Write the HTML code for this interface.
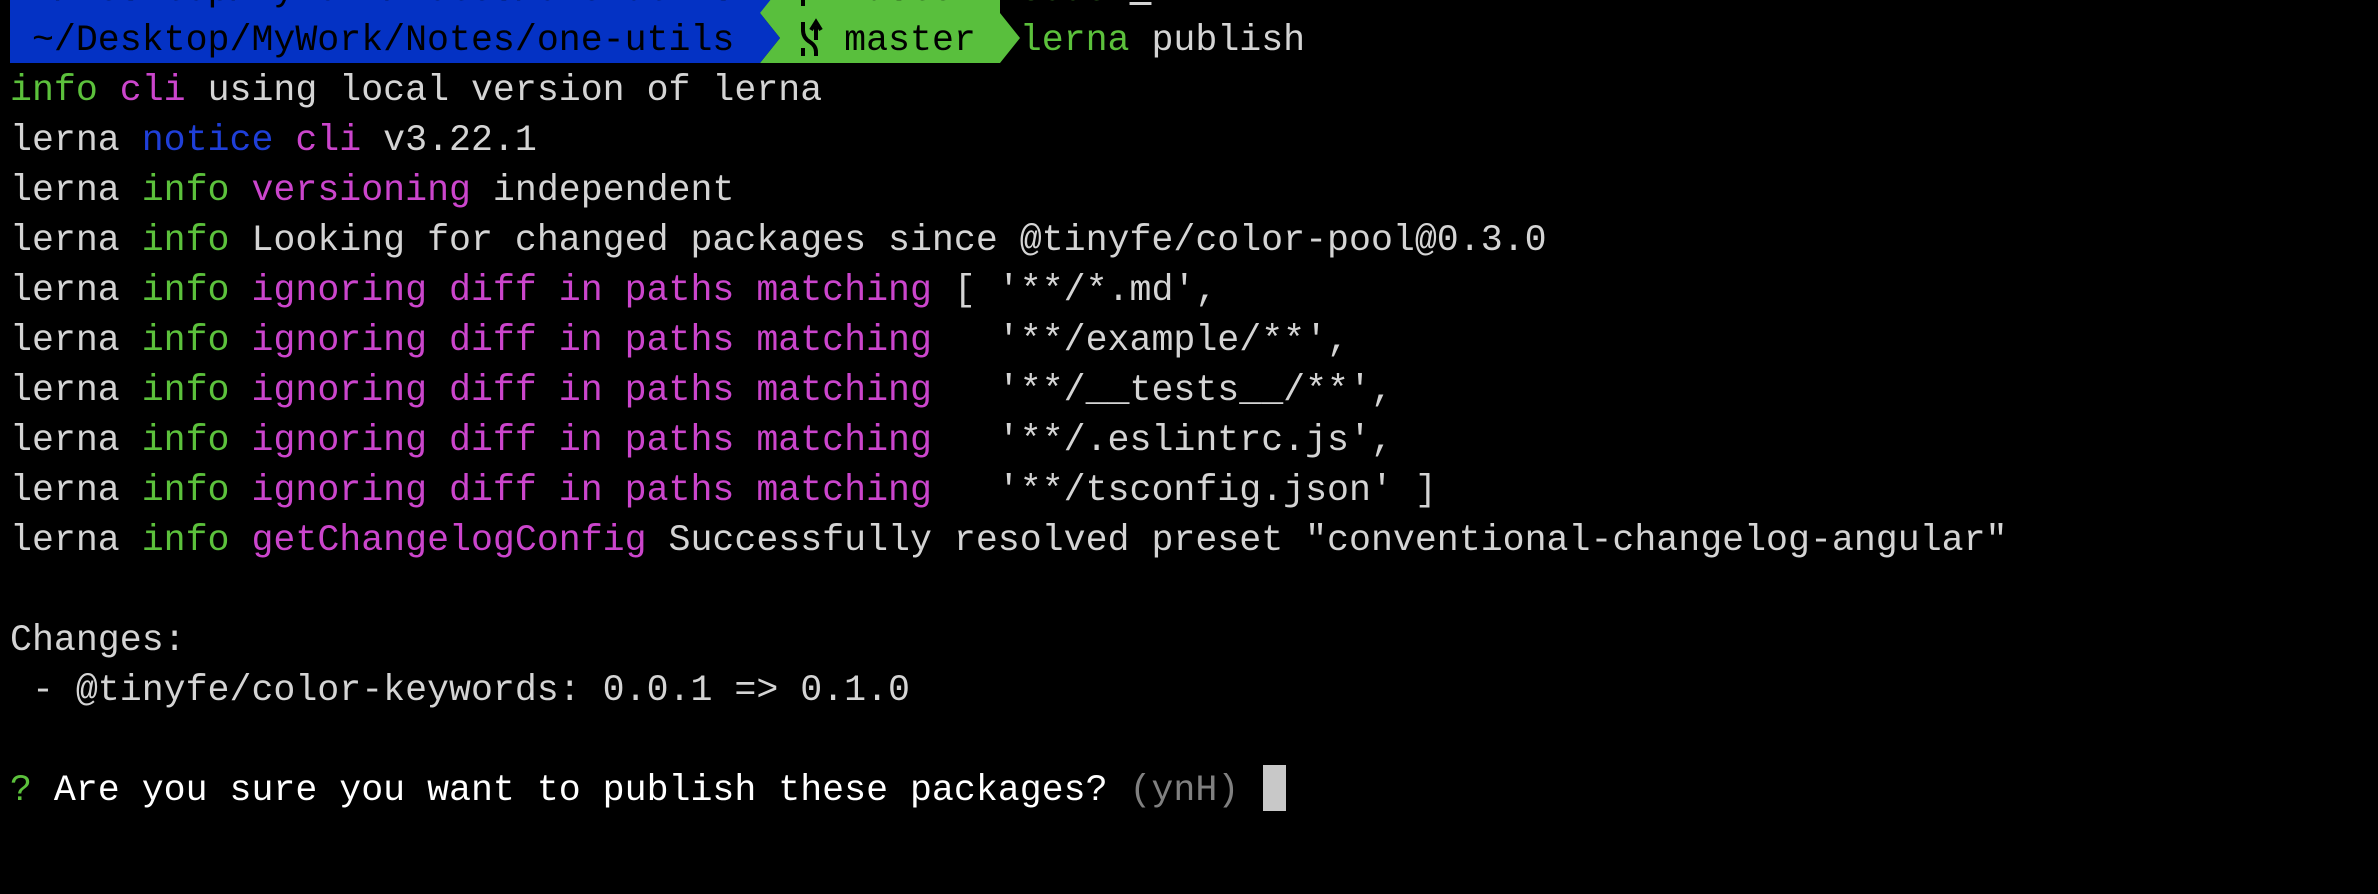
<!DOCTYPE html>
<html><head><meta charset="utf-8"><style>
html,body{margin:0;padding:0;background:#000;width:2378px;height:894px;overflow:hidden}
.t{position:absolute;left:10px;font-family:"Liberation Mono","DejaVu Sans Mono",monospace;font-size:36.6px;line-height:50px;white-space:pre;color:#d4d4d4}
.g{color:#5cc13c}.m{color:#cb45cc}.b{color:#1f3fd8}.w{color:#fff}.d{color:#808080}.k{color:#000}
</style></head><body>
<svg style="position:absolute;left:0;top:0" width="1100" height="63">
<rect x="10" y="0" width="750" height="63" fill="#0432c4"/>
<polygon points="760,0 1000,0 1000,13 1020,38 1000,63 760,63 780,38 760,13" fill="#59bf3d"/>
<polygon points="760,13 780,38 760,63" fill="#0432c4"/>
<polygon points="760,-40 780,-12 760,13" fill="#0432c4"/>
<polygon points="1000,-40 1020,-12 1000,13" fill="#000"/>
<path d="M803 22 L803 30 Q803 38 810 42 Q816 46 816 52 L816 56 M803 56 L803 48 M816 40 L816 26 M811 30 L816 22 L821 30" stroke="#000" stroke-width="4" fill="none"/>
<path d="M803 -10 L803 6" stroke="#000" stroke-width="4"/>
</svg>
<div class="t" style="top:-34px"> <span class="k">~/Desktop/MyWork/Notes/one-utils</span>     <span class="k">master</span>  <span class="g">code</span> <span style="text-decoration:underline">.</span></div>
<div class="t" style="top:16px"> <span class="k">~/Desktop/MyWork/Notes/one-utils</span>     <span class="k">master</span>  <span class="g">lerna</span> publish</div>
<div class="t" style="top:66px"><span class="g">info</span> <span class="m">cli</span> using local version of lerna
lerna <span class="b">notice</span> <span class="m">cli</span> v3.22.1
lerna <span class="g">info</span> <span class="m">versioning</span> independent
lerna <span class="g">info</span> Looking for changed packages since @tinyfe/color-pool@0.3.0
lerna <span class="g">info</span> <span class="m">ignoring diff in paths matching</span> [ '**/*.md',
lerna <span class="g">info</span> <span class="m">ignoring diff in paths matching</span>   '**/example/**',
lerna <span class="g">info</span> <span class="m">ignoring diff in paths matching</span>   '**/__tests__/**',
lerna <span class="g">info</span> <span class="m">ignoring diff in paths matching</span>   '**/.eslintrc.js',
lerna <span class="g">info</span> <span class="m">ignoring diff in paths matching</span>   '**/tsconfig.json' ]
lerna <span class="g">info</span> <span class="m">getChangelogConfig</span> Successfully resolved preset "conventional-changelog-angular"

Changes:
 - @tinyfe/color-keywords: 0.0.1 => 0.1.0

<span class="g">?</span> <span class="w">Are you sure you want to publish these packages?</span> <span class="d">(ynH)</span></div>
<div style="position:absolute;left:1263px;top:765px;width:23px;height:46px;background:#c8c8c8"></div>
</body></html>
